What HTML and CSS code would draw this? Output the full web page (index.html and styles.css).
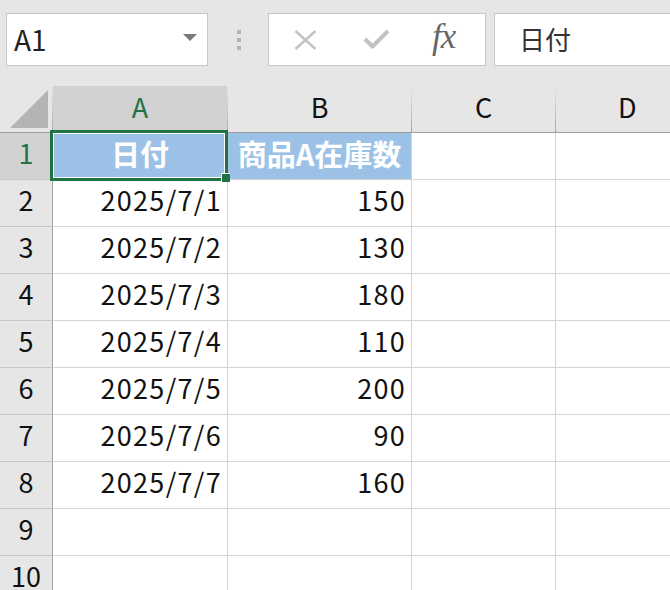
FILE: index.html
```html
<!DOCTYPE html>
<html lang="ja">
<head>
<meta charset="utf-8">
<title>Sheet</title>
<link rel="stylesheet" href="styles.css">
</head>
<body>
<div class="toolbar">
  <div class="namebox">
    <span class="name">A1</span>
    <svg class="dd" width="14" height="8" viewBox="0 0 14 8"><polygon points="0,0 14,0 7,7" fill="#7a7a7a"/></svg>
  </div>
  <div class="grip"><i></i><i></i><i></i></div>
  <div class="fbuttons">
    <svg class="ic-x" width="23" height="20" viewBox="0 0 23 20"><path d="M1.5 1 L21.5 19 M21.5 1 L1.5 19" stroke="#c3c3c3" stroke-width="2.6" fill="none"/></svg>
    <svg class="ic-ok" width="27" height="22" viewBox="0 0 27 22"><path d="M2 11 L9.5 18.5 L25 3" stroke="#c3c3c3" stroke-width="4.2" fill="none" stroke-linejoin="round"/></svg>
    <span class="fx">fx</span>
  </div>
  <div class="finput">日付</div>
</div>
<div class="sheet">
  <div class="grid">
    <div class="ch corner"><svg width="52" height="46" viewBox="0 0 52 46"><polygon points="10,42 48,4 48,42" fill="#b4b4b4"/></svg></div>
    <div class="ch sel">A</div>
    <div class="ch">B</div>
    <div class="ch">C</div>
    <div class="ch last">D</div>

    <div class="rh sel">1</div>
    <div class="c head">日付</div>
    <div class="c head">商品A在庫数</div>
    <div class="c"></div>
    <div class="c"></div>

    <div class="rh">2</div><div class="c">2025/7/1</div><div class="c">150</div><div class="c"></div><div class="c"></div>
    <div class="rh">3</div><div class="c">2025/7/2</div><div class="c">130</div><div class="c"></div><div class="c"></div>
    <div class="rh">4</div><div class="c">2025/7/3</div><div class="c">180</div><div class="c"></div><div class="c"></div>
    <div class="rh">5</div><div class="c">2025/7/4</div><div class="c">110</div><div class="c"></div><div class="c"></div>
    <div class="rh">6</div><div class="c">2025/7/5</div><div class="c">200</div><div class="c"></div><div class="c"></div>
    <div class="rh">7</div><div class="c">2025/7/6</div><div class="c">90</div><div class="c"></div><div class="c"></div>
    <div class="rh">8</div><div class="c">2025/7/7</div><div class="c">160</div><div class="c"></div><div class="c"></div>
    <div class="rh">9</div><div class="c"></div><div class="c"></div><div class="c"></div><div class="c"></div>
    <div class="rh">10</div><div class="c"></div><div class="c"></div><div class="c"></div><div class="c"></div>
  </div>
  <div class="selbox"></div>
  <div class="handle"></div>
</div>
</body>
</html>
```

FILE: styles.css
```css
html, body {
  margin: 0;
  padding: 0;
  overflow: hidden;
  width: 670px;
  height: 590px;
  background: #ffffff;
  font-family: "Noto Sans CJK JP", "Noto Sans", sans-serif;
}

.toolbar {
  height: 86px;
  background: #e6e6e6;
  display: flex;
  align-items: flex-start;
  padding-top: 13px;
  box-sizing: border-box;
  white-space: nowrap;
}

.toolbar > * {
  flex-shrink: 0;
}

.namebox {
  margin-left: 6px;
  width: 202px;
  height: 53px;
  box-sizing: border-box;
  border: 1px solid #c6c6c6;
  background: #fff;
  display: flex;
  align-items: center;
  justify-content: space-between;
  padding: 0 10px 0 7px;
}

.name {
  font-size: 28px;
  color: #222;
  line-height: 1;
  margin-top: -2px;
}

.dd {
  display: block;
  margin-top: -4px;
}

.grip {
  width: 60px;
  height: 53px;
  display: flex;
  flex-direction: column;
  align-items: center;
  justify-content: center;
  gap: 4px;
  padding-left: 1px;
  box-sizing: border-box;
}

.grip i {
  display: block;
  width: 4px;
  height: 4px;
  background: #b4b4b4;
}

.fbuttons {
  width: 218px;
  height: 53px;
  box-sizing: border-box;
  border: 1px solid #c6c6c6;
  background: #fff;
  display: flex;
  align-items: center;
  padding-left: 25px;
}

.ic-x {
  display: block;
}

.ic-ok {
  display: block;
  margin-left: 46px;
  margin-top: -1px;
}

.fx {
  font-family: "Liberation Serif", "DejaVu Serif", serif;
  font-style: italic;
  font-size: 35px;
  color: #666;
  margin-left: 42px;
  margin-top: -5px;
  letter-spacing: -1px;
}

.finput {
  flex: 1 1 auto;
  flex-shrink: 1;
  min-width: 0;
  margin-left: 8px;
  height: 53px;
  box-sizing: border-box;
  border: 1px solid #c6c6c6;
  border-right: none;
  background: #fff;
  font-size: 26px;
  color: #333;
  display: flex;
  align-items: center;
  padding-left: 24px;
  padding-bottom: 3px;
}

.sheet {
  position: relative;
}

.grid {
  display: grid;
  grid-template-columns: 53px 175px 184px 144px 1fr;
  grid-auto-rows: 47px;
}

.grid > div {
  box-sizing: border-box;
  border-right: 1px solid #d4d4d4;
  border-bottom: 1px solid #d4d4d4;
  display: flex;
  align-items: center;
  font-size: 27px;
  color: #111;
  overflow: hidden;
  padding-bottom: 7px;
  line-height: 1;
}

.grid > .ch {
  background: #e6e6e6;
  justify-content: center;
  border-style: solid;
  border-width: 0 1px 1px 0;
  border-image: linear-gradient(to bottom, #e6e6e6 0%, #c4c4c4 60%, #9e9e9e 100%) 1;
  padding-bottom: 6px;
}

.grid > .ch.last {
  justify-content: flex-start;
  padding-left: 62px;
  border-right-width: 0;
}

.grid > .ch.sel {
  background: #d2d2d2;
  color: #217346;
}

.grid > .corner {
  padding: 0;
  align-items: stretch;
  justify-content: flex-start;
}

.corner svg {
  display: block;
}

.grid > .rh {
  background: #e6e6e6;
  justify-content: center;
  border-right: 1px solid #a3a3a3;
  border-bottom: 1px solid #c8c8c8;
}

.grid > .rh.sel {
  background: #d2d2d2;
  color: #217346;
}

.grid > .c {
  justify-content: flex-end;
  padding-right: 5px;
  letter-spacing: 1.3px;
}

.grid > .c:nth-child(5n) {
  border-right: none;
}

.grid > .c.head {
  background: #9bc2e6;
  color: #fff;
  font-weight: bold;
  font-size: 29px;
  letter-spacing: 0;
  justify-content: center;
  padding-right: 0;
  padding-bottom: 5px;
}

.selbox {
  position: absolute;
  left: 50px;
  top: 44px;
  width: 178px;
  height: 51px;
  box-sizing: border-box;
  border: 3px solid #217346;
  box-shadow: inset 0 0 0 1px #ffffff;
}

.handle {
  position: absolute;
  left: 221px;
  top: 87px;
  width: 9px;
  height: 9px;
  box-sizing: border-box;
  background: #217346;
  border-top: 1px solid #fff;
  border-left: 1px solid #fff;
}
```
